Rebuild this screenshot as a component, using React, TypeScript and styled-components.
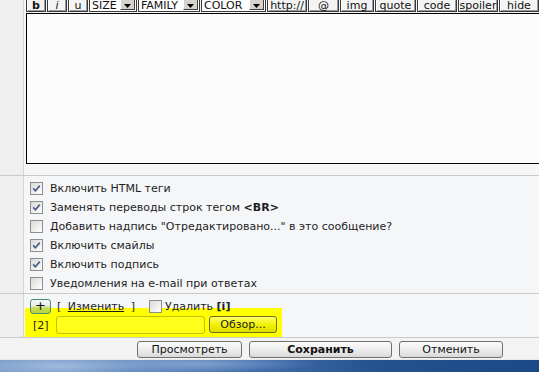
import React from 'react'
import styled, { createGlobalStyle } from 'styled-components'

const GlobalStyle = createGlobalStyle`
  html, body {
    margin: 0;
    padding: 0;
    background: #f5f6f8;
    font-family: "DejaVu Sans", Verdana, sans-serif;
    font-size: 11px;
    color: #1e1e1e;
    overflow: hidden;
  }
`

const Page = styled.div`
  width: 539px;
  height: 372px;
  overflow: hidden;
  display: flex;
  flex-direction: column;
`

const Section = styled.div`
  display: grid;
  grid-template-columns: 24px 1fr;
  border-bottom: 1px solid #cacaca;
`

const Side = styled.div`
  background: #efefef;
  border-right: 1px solid #d5d5d5;
`

const EditorCell = styled.div`
  padding: 0 0 11px 2px;
  overflow: hidden;
`

const Toolbar = styled.div`
  display: flex;
  gap: 1px;
  margin-top: -3px;
  height: 15px;
  white-space: nowrap;
`

interface ToolProps {
  w: number
}

const ToolButton = styled.div<ToolProps>`
  flex: none;
  box-sizing: border-box;
  width: ${p => p.w}px;
  height: 15px;
  border: 1px solid #3a3a3a;
  box-shadow: inset 1px 1px #ffffff, inset -1px -1px #9a9a9a;
  background: #f4f4f4;
  text-align: center;
  line-height: 15px;
  font-size: 11px;
  color: #111;
`

const Select = styled.div<ToolProps>`
  flex: none;
  box-sizing: border-box;
  width: ${p => p.w}px;
  height: 15px;
  border: 1px solid #3a3a3a;
  background: #fff;
  display: flex;
  align-items: stretch;
  font-size: 11px;
  line-height: 15px;
  color: #111;
`

const SelectLabel = styled.span`
  flex: 1;
  padding-left: 2px;
  overflow: hidden;
`

const SelectArrow = styled.span`
  width: 15px;
  margin: 1px;
  box-sizing: border-box;
  background: #d6d3ce;
  border: 1px solid;
  border-color: #fff #404040 #404040 #fff;
  display: flex;
  align-items: center;
  justify-content: center;
  padding-top: 2px;
`

const TextArea = styled.div`
  margin-top: 1px;
  height: 149px;
  border: 1px solid #000;
  border-right: none;
  background: #fcfcfc;
`

const OptionsCell = styled.div`
  padding: 3px 0 0 6px;
`

const OptionRow = styled.label`
  display: flex;
  align-items: center;
  height: 19px;
  color: #1e1e1e;
  white-space: pre;
`

const Box = styled.span`
  flex: none;
  box-sizing: border-box;
  width: 13px;
  height: 13px;
  border: 1px solid #8c8e90;
  background: linear-gradient(135deg, #d9d9d4 0%, #f4f4f2 70%, #ffffff 100%);
  margin-right: 7px;
  display: flex;
  align-items: center;
  justify-content: center;
`

const AttachCell = styled.div`
  padding: 5px 0 0 6px;
`

const AttachTop = styled.div`
  display: flex;
  align-items: center;
  height: 15px;
  white-space: pre;
`

const PlusButton = styled.span`
  position: relative;
  z-index: 1;
  box-sizing: border-box;
  width: 21px;
  height: 15px;
  border: 1px solid #4f8a73;
  border-radius: 3px;
  background: linear-gradient(#f3f6f8 0%, #e6ede8 45%, #c6dc5a 60%, #b8d43a 100%);
  font-size: 13px;
  line-height: 12px;
  text-align: center;
  color: #111;
  margin-right: 6px;
`

const Link = styled.span`
  text-decoration: underline;
  margin: 0 3px;
`

const DeleteWrap = styled.span`
  display: flex;
  align-items: center;
  margin-left: 14px;
  & > span:first-child {
    margin-right: 3px;
  }
`

const YellowRow = styled.div`
  margin: -6px 0 0 -5px;
  width: 257px;
  height: 29px;
  box-sizing: border-box;
  padding: 8px 0 0 8px;
  background: #ffff00;
  display: flex;
  align-items: flex-start;
`

const Index = styled.span`
  width: 23px;
  line-height: 17px;
  padding-top: 1px;
`

const FileInput = styled.div`
  width: 149px;
  height: 18px;
  box-sizing: border-box;
  border: 1px solid #c2c200;
  border-radius: 3px;
  background: #ffff1a;
  margin-right: 4px;
`

const BrowseButton = styled.div`
  width: 68px;
  height: 17px;
  box-sizing: border-box;
  border: 1px solid #6e6e1c;
  border-radius: 3px;
  background: linear-gradient(#ffff6a, #f0f000 55%, #dede00);
  text-align: center;
  line-height: 15px;
  color: #1a1a1a;
`

const ButtonBar = styled.div`
  height: 22px;
  background: #f3f3f3;
  border-bottom: 1px solid #e6e8ec;
  display: flex;
  justify-content: flex-end;
  align-items: flex-start;
  gap: 7px;
  padding: 3px 36px 0 0;
  box-sizing: border-box;
`

interface ActionProps {
  w: number
  primary?: boolean
}

const ActionButton = styled.div<ActionProps>`
  width: ${p => p.w}px;
  height: 17px;
  box-sizing: border-box;
  border: 1px solid #6f6f6f;
  border-radius: 3px;
  background: linear-gradient(#fbfbfb, #eeeeee 50%, #d9d9d9);
  text-align: center;
  line-height: 15px;
  font-weight: ${p => (p.primary ? 'bold' : 'normal')};
  color: #111;
`

const Sky = styled.div`
  flex: 1;
  background:
    radial-gradient(ellipse 80px 10px at 60px 6px, rgba(190, 210, 235, 0.6), transparent),
    radial-gradient(ellipse 120px 8px at 200px 4px, rgba(170, 195, 230, 0.5), transparent),
    linear-gradient(90deg, #7e9ecb 0%, #6a8fc2 25%, #3e6aa8 50%, #24528f 70%, #1b4886 100%);
`

const Check: React.FC<{ on: boolean }> = ({ on }) => (
  <Box>
    {on && (
      <svg width="9" height="9" viewBox="0 0 9 9">
        <path d="M1.2 4.4 L3.4 6.8 L7.8 1.6" fill="none" stroke="#4a5f8e" strokeWidth="1.7" />
      </svg>
    )}
  </Box>
)

const Arrow = () => (
  <svg width="7" height="4" viewBox="0 0 7 4">
    <path d="M0 0 H7 L3.5 4 Z" fill="#000" />
  </svg>
)

const tools: { label: React.ReactNode; w: number; select?: boolean }[] = [
  { label: <b>b</b>, w: 20 },
  { label: <i>i</i>, w: 20 },
  { label: 'u', w: 20 },
  { label: 'SIZE', w: 48, select: true },
  { label: 'FAMILY', w: 62, select: true },
  { label: 'COLOR', w: 65, select: true },
  { label: 'http://', w: 40 },
  { label: '@', w: 31 },
  { label: 'img', w: 34 },
  { label: 'quote', w: 41 },
  { label: 'code', w: 40 },
  { label: 'spoiler', w: 40 },
  { label: 'hide', w: 40 },
]

const options: { text: React.ReactNode; on: boolean }[] = [
  { text: 'Включить HTML теги', on: true },
  { text: <>Заменять переводы строк тегом <b>&lt;BR&gt;</b></>, on: true },
  { text: 'Добавить надпись "Отредактировано..." в это сообщение?', on: false },
  { text: 'Включить смайлы', on: true },
  { text: 'Включить подпись', on: true },
  { text: 'Уведомления на e-mail при ответах', on: false },
]

export default function App() {
  return (
    <Page>
      <GlobalStyle />
      <Section>
        <Side />
        <EditorCell>
          <Toolbar>
            {tools.map((t, i) =>
              t.select ? (
                <Select key={i} w={t.w}>
                  <SelectLabel>{t.label}</SelectLabel>
                  <SelectArrow>
                    <Arrow />
                  </SelectArrow>
                </Select>
              ) : (
                <ToolButton key={i} w={t.w}>
                  {t.label}
                </ToolButton>
              )
            )}
          </Toolbar>
          <TextArea />
        </EditorCell>
      </Section>
      <Section>
        <Side />
        <OptionsCell>
          {options.map((o, i) => (
            <OptionRow key={i}>
              <Check on={o.on} />
              <span>{o.text}</span>
            </OptionRow>
          ))}
        </OptionsCell>
      </Section>
      <Section>
        <Side />
        <AttachCell>
          <AttachTop>
            <PlusButton>+</PlusButton>
            <span>
              [ <Link>Изменить</Link> ]
            </span>
            <DeleteWrap>
              <Check on={false} />
              <span>
                Удалить <b>[i]</b>
              </span>
            </DeleteWrap>
          </AttachTop>
          <YellowRow>
            <Index>[2]</Index>
            <FileInput />
            <BrowseButton>Обзор...</BrowseButton>
          </YellowRow>
        </AttachCell>
      </Section>
      <ButtonBar>
        <ActionButton w={105}>Просмотреть</ActionButton>
        <ActionButton w={143} primary>
          Сохранить
        </ActionButton>
        <ActionButton w={104}>Отменить</ActionButton>
      </ButtonBar>
      <Sky />
    </Page>
  )
}
